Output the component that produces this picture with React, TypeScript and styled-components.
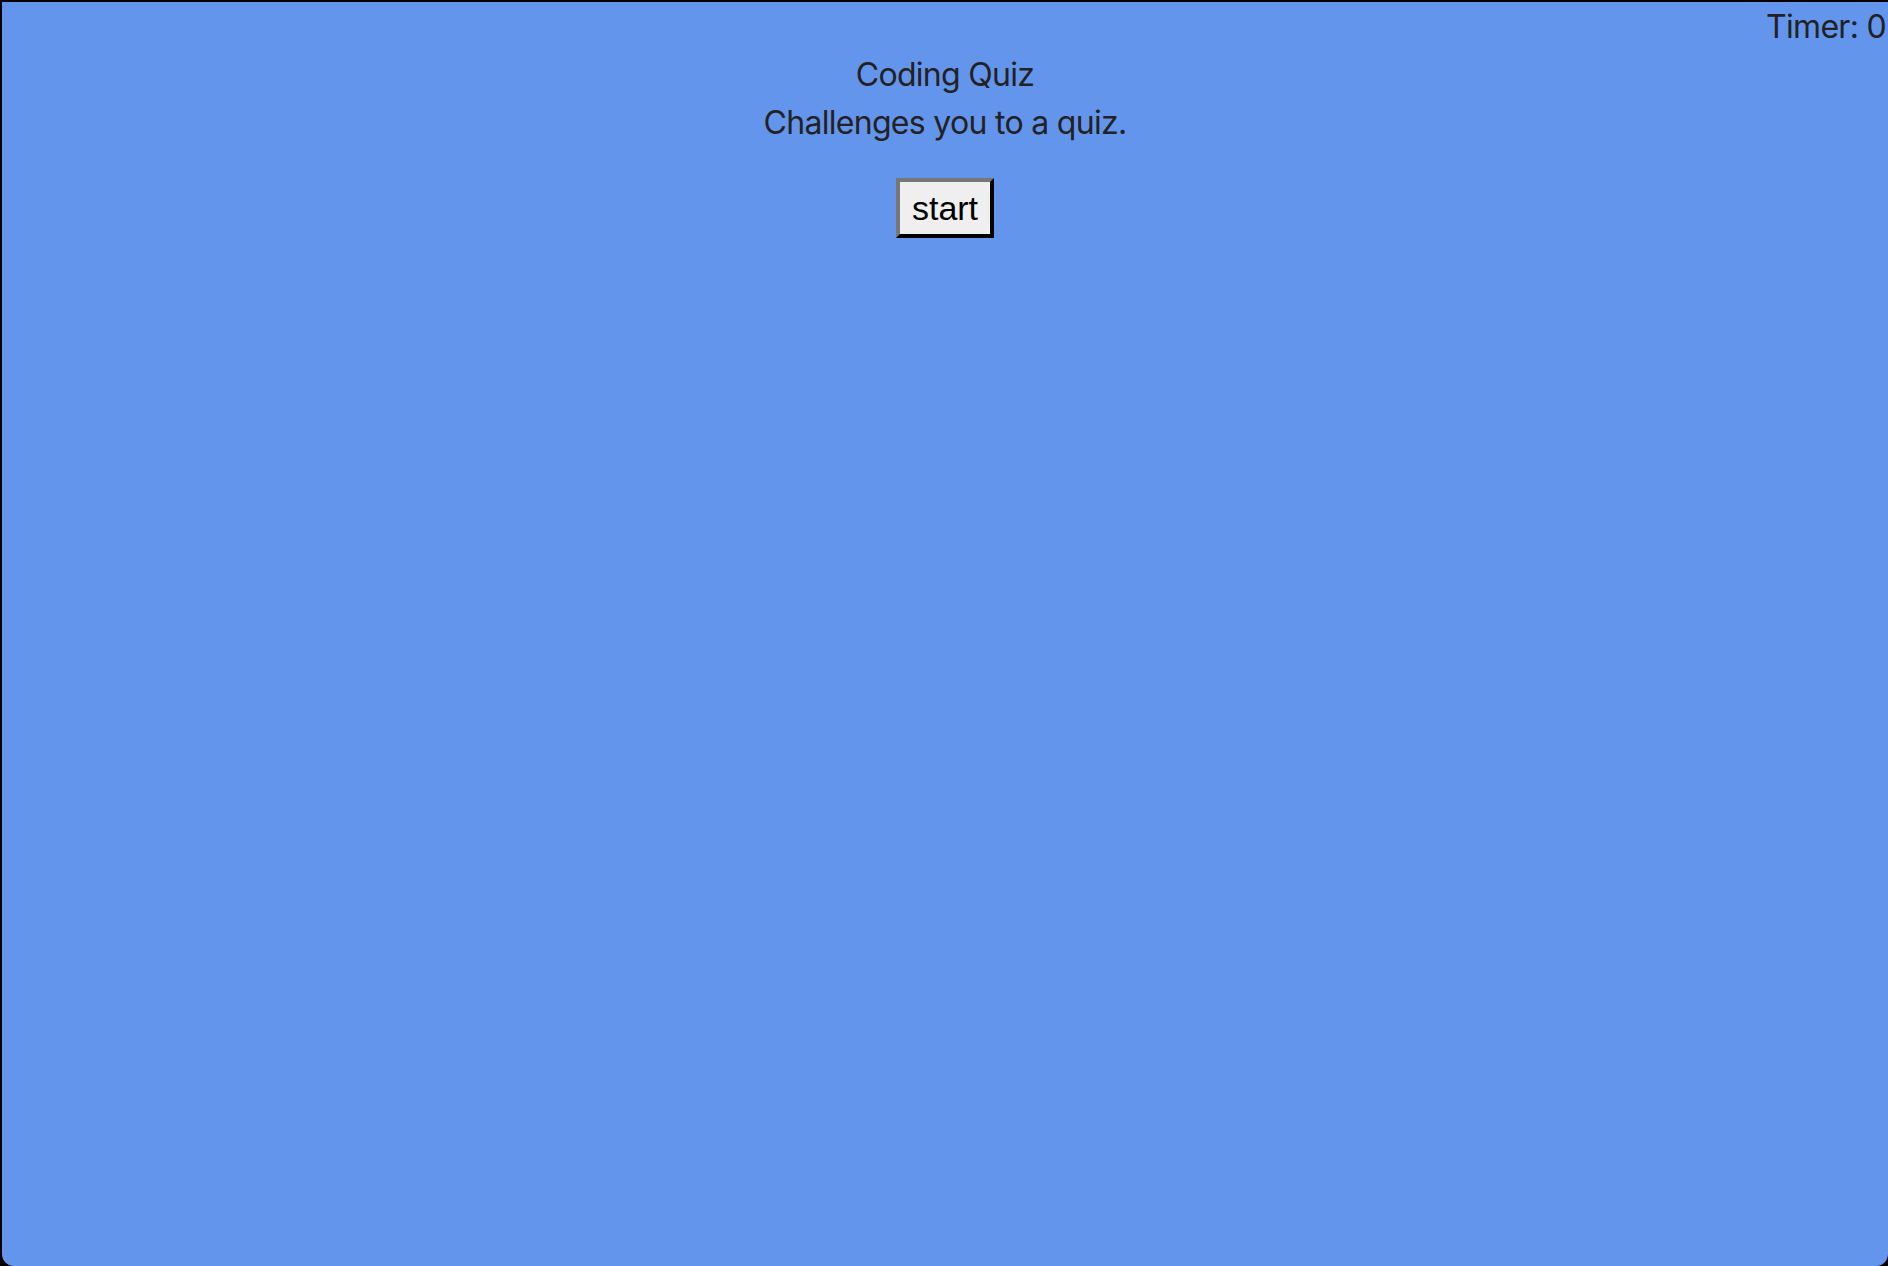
import React from "react";
import styled, { createGlobalStyle } from "styled-components";

const GlobalStyle = createGlobalStyle`
  html, body {
    margin: 0;
    padding: 0;
    background: #000;
    height: 100%;
  }
  #root {
    height: 100%;
  }
`;

const Window = styled.div`
  box-sizing: border-box;
  margin: 2px 0 0 2px;
  padding-top: 1px;
  height: 1264px;
  background: #6495ed;
  border-radius: 0 0 12px 12px;
  font-family: Inter, "Liberation Sans", sans-serif;
  font-size: 32px;
  letter-spacing: -0.7px;
  line-height: 48px;
  color: #222;
  display: flex;
  flex-direction: column;
`;

const TimerBar = styled.div`
  display: flex;
  justify-content: flex-end;
  padding-right: 2px;
`;

const Header = styled.header`
  display: flex;
  flex-direction: column;
  align-items: center;
`;

const Line = styled.div`
  text-align: center;
`;

const StartButton = styled.button`
  margin-top: 31px;
  box-sizing: border-box;
  height: 60px;
  padding: 0 12px;
  border: 4px outset #767676;
  border-top-color: #777;
  border-left-color: #777;
  border-bottom-color: #222;
  border-right-color: #222;
  background: #efefef;
  color: #000;
  font-family: "Liberation Sans", Arial, sans-serif;
  font-size: 34px;
  letter-spacing: 0;
  line-height: 38px;
  cursor: pointer;
`;

export default function App() {
  return (
    <>
      <GlobalStyle />
      <Window>
        <TimerBar>Timer: 0</TimerBar>
        <Header>
          <Line>Coding Quiz</Line>
          <Line>Challenges you to a quiz.</Line>
          <StartButton>start</StartButton>
        </Header>
      </Window>
    </>
  );
}
